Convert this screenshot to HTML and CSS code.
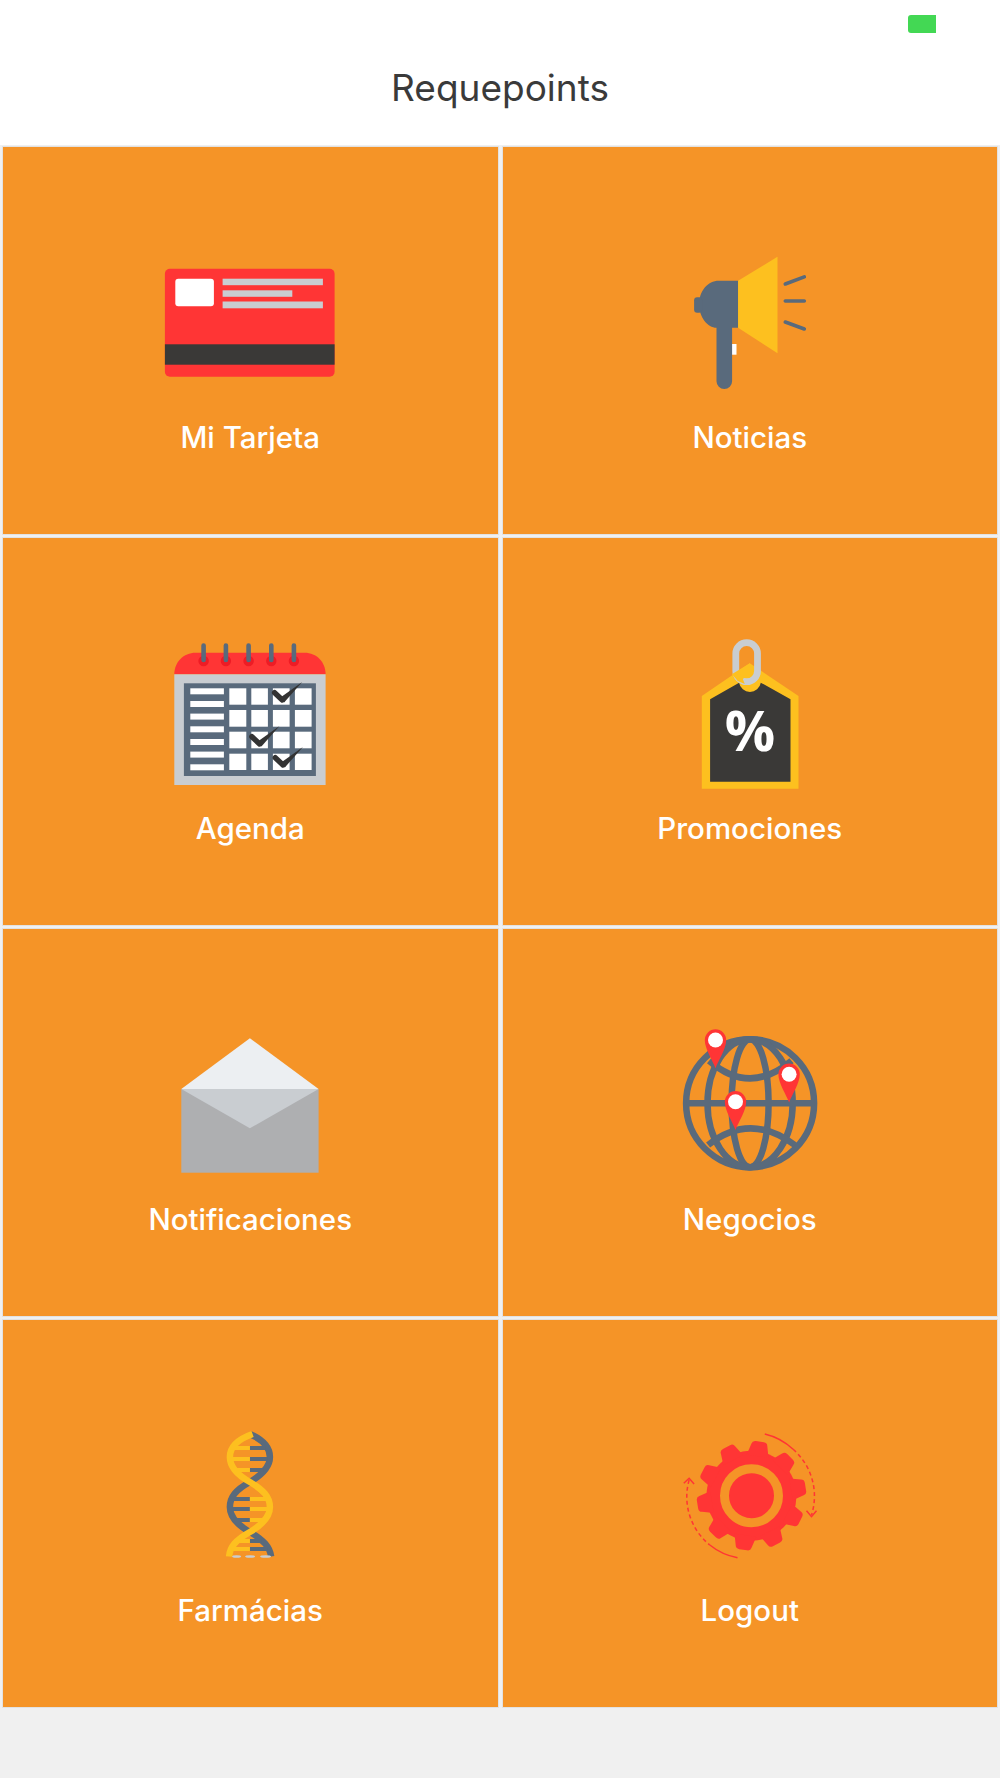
FILE: index.html
```html
<!DOCTYPE html>
<html lang="es">
<head>
  <meta charset="UTF-8">
  <title>Requepoints</title>
  <link rel="stylesheet" href="styles.css">
</head>
<body>
  <header class="cabecera">
    <div class="estado"><span class="bateria"></span></div>
    <h1>Requepoints</h1>
  </header>

  <div class="menu">
    <a class="opcion">
      <svg class="icono" viewBox="150.4 242 200 160">
        <rect x="165.3" y="268.7" width="169.7" height="108" rx="5" fill="#ff3535"/>
        <rect x="165.3" y="344.3" width="169.7" height="20.4" fill="#3a3937"/>
        <rect x="175.7" y="278.7" width="38.6" height="27.6" rx="3" fill="#fff"/>
        <rect x="223" y="278.7" width="100.3" height="6.5" fill="#c9cdd1"/>
        <rect x="223" y="290.3" width="69.7" height="6.5" fill="#c9cdd1"/>
        <rect x="223" y="301.5" width="100.3" height="6.8" fill="#c9cdd1"/>
      </svg>
      <span>Mi Tarjeta</span>
    </a>

    <a class="opcion">
      <svg class="icono" viewBox="650.2 242 200 160">
        <rect x="732" y="344" width="4.7" height="10.7" fill="#fff"/>
        <path d="M738.3 280.7H719C708 280.7 699.3 291 699.3 304.2S708 327.7 716.7 327.7V381.2A7.8 7.8 0 0 0 732.3 381.2V327.7H738.3Z" fill="#596a7c"/>
        <rect x="694.3" y="297.3" width="8" height="15.4" rx="3" fill="#596a7c"/>
        <path d="M738.3 280.7L777.7 256.7V353.3L738.3 327.7Z" fill="#fdc01f"/>
        <path d="M785.5 284L804.5 276.9M785.5 301H804.5M785.5 322L804.5 329" stroke="#596a7c" stroke-width="3.6" stroke-linecap="round"/>
      </svg>
      <span>Noticias</span>
    </a>

    <a class="opcion">
      <svg class="icono" viewBox="150.4 633 200 160">
        <defs>
          <g id="visto">
            <path d="M0 0L7.7 7.3" stroke="#333" stroke-width="5.4" stroke-linecap="round"/>
            <path d="M5.5 5L9.5 9.8L27.6 -10.8Z" fill="#333"/>
          </g>
        </defs>
        <path d="M174.7 674.3C174.7 662 184 652.7 196 652.7H305C317 652.7 326 662 326 674.3Z" fill="#ff3535"/>
        <rect x="174.7" y="674.3" width="151.3" height="110.7" fill="#c9cdd1"/>
        <rect x="184.3" y="683.3" width="132" height="92.7" fill="#596a7c"/>
        <g fill="#ee1c25">
          <circle cx="204" cy="661" r="5.2"/>
          <circle cx="226.3" cy="661" r="5.2"/>
          <circle cx="249" cy="661" r="5.2"/>
          <circle cx="271.7" cy="661" r="5.2"/>
          <circle cx="294.3" cy="661" r="5.2"/>
        </g>
        <path d="M204 645.5V660M226.3 645.5V660M249 645.5V660M271.7 645.5V660M294.3 645.5V660" stroke="#596a7c" stroke-width="4.6" stroke-linecap="round"/>
        <g fill="#fff">
          <rect x="190.7" y="688.3" width="33.6" height="6"/>
          <rect x="190.7" y="701" width="33.6" height="6"/>
          <rect x="190.7" y="713.6" width="33.6" height="6"/>
          <rect x="190.7" y="726.3" width="33.6" height="6"/>
          <rect x="190.7" y="739" width="33.6" height="6"/>
          <rect x="190.7" y="751.6" width="33.6" height="6"/>
          <rect x="190.7" y="764.3" width="33.6" height="6"/>
          <rect x="229.7" y="688.3" width="17" height="16.4"/>
          <rect x="251.7" y="688.3" width="16.6" height="16.4"/>
          <rect x="273.3" y="688.3" width="16.7" height="16.4"/>
          <rect x="295.3" y="688.3" width="16.7" height="16.4"/>
          <rect x="229.7" y="710" width="17" height="16.7"/>
          <rect x="251.7" y="710" width="16.6" height="16.7"/>
          <rect x="273.3" y="710" width="16.7" height="16.7"/>
          <rect x="295.3" y="710" width="16.7" height="16.7"/>
          <rect x="229.7" y="731.7" width="17" height="16.6"/>
          <rect x="251.7" y="731.7" width="16.6" height="16.6"/>
          <rect x="273.3" y="731.7" width="16.7" height="16.6"/>
          <rect x="295.3" y="731.7" width="16.7" height="16.6"/>
          <rect x="229.7" y="753.7" width="17" height="16.3"/>
          <rect x="251.7" y="753.7" width="16.6" height="16.3"/>
          <rect x="273.3" y="753.7" width="16.7" height="16.3"/>
          <rect x="295.3" y="753.7" width="16.7" height="16.3"/>
        </g>
        <use href="#visto" x="275" y="692.7"/>
        <use href="#visto" x="252.3" y="736.7"/>
        <use href="#visto" x="275.7" y="757.7"/>
      </svg>
      <span>Agenda</span>
    </a>

    <a class="opcion">
      <svg class="icono" viewBox="650.2 633 200 160">
        <path d="M702 696L750 663.3L798.7 696V788.7H702Z" fill="#fdc01f"/>
        <path d="M710.3 699.3L739.3 682.7A11 11 0 0 0 761 682.7L790.7 699.3V781.7H710.3Z" fill="#3a3937"/>
        <rect x="736" y="642.7" width="21.7" height="39" rx="10.8" fill="none" stroke="#c9cdd1" stroke-width="6.8"/>
        <path d="M732 674.3L750 663.3L752.7 671.5L743 679L745 684L738 681Z" fill="#fdc01f"/>
        <text class="porcentaje" x="750.3" y="750.7">%</text>
      </svg>
      <span>Promociones</span>
    </a>

    <a class="opcion">
      <svg class="icono" viewBox="150.4 1024 200 160">
        <path d="M250.3 1038.3L319 1089H181.7Z" fill="#eceff2"/>
        <rect x="181.7" y="1089" width="137.3" height="83.7" fill="#aeafb1"/>
        <path d="M181.7 1089H319L250.3 1128.3Z" fill="#c9cdd1"/>
      </svg>
      <span>Notificaciones</span>
    </a>

    <a class="opcion">
      <svg class="icono" viewBox="650.2 1024 200 160">
        <defs>
          <g id="pin">
            <path d="M-10.7 0A10.7 10.7 0 0 1 10.7 0C10.7 9 3 20 0 28.3C-3 20 -10.7 9 -10.7 0Z" fill="#ff3535"/>
            <circle r="7.5" fill="#fff"/>
          </g>
        </defs>
        <g fill="none" stroke="#596a7c" stroke-width="6.5">
          <circle cx="750.3" cy="1103.3" r="64"/>
          <ellipse cx="750.3" cy="1103.3" rx="18.5" ry="64"/>
          <ellipse cx="750.3" cy="1103.3" rx="42.6" ry="64"/>
          <path d="M686.3 1103.3H814.3"/>
          <path d="M709.3 1060.7Q750 1096 791.7 1060.7"/>
          <path d="M708.3 1145Q750 1111.6 795 1145"/>
        </g>
        <use href="#pin" x="715.7" y="1040"/>
        <use href="#pin" x="789.3" y="1074.3"/>
        <use href="#pin" x="735.7" y="1101.7"/>
      </svg>
      <span>Negocios</span>
    </a>

    <a class="opcion">
      <svg class="icono" viewBox="150.4 1415 200 160">
        <path d="M250.3 1434C264 1440 270.3 1448 270.3 1457C270.3 1466 264 1474 250.3 1482C236 1490 230.3 1497 230.3 1507C230.3 1516 236 1524 250.3 1532C264 1540 270.3 1547 271.5 1556.5" fill="none" stroke="#596a7c" stroke-width="6.5"/>
        <path d="M250.3 1448H266M250.3 1459H268M250.3 1470H264M234 1499H250.3M232 1509H250.3M236 1520H250.3M250.3 1541H262M250.3 1549H268" stroke="#596a7c" stroke-width="3.8"/>
        <path d="M234.6 1448H250.3M232.6 1459H250.3M236.6 1470H250.3M250.3 1499H267M250.3 1509H269M250.3 1520H265M238 1541H250.3M233 1549H250.3" stroke="#fdc01f" stroke-width="3.8"/>
        <path d="M253 1434C236 1440 230.3 1448 230.3 1457C230.3 1466 236 1474 250.3 1482C264 1490 270.3 1497 270.3 1507C270.3 1516 264 1524 250.3 1532C236 1540 230.3 1547 229.5 1556.5" fill="none" stroke="#fdc01f" stroke-width="6.5"/>
        <g fill="#c9cdd1">
          <ellipse cx="237" cy="1556.5" rx="4.5" ry="1.3"/>
          <ellipse cx="250.5" cy="1556.5" rx="5" ry="1.3"/>
          <ellipse cx="266" cy="1556.5" rx="5.5" ry="1.3"/>
        </g>
      </svg>
      <span>Farmácias</span>
    </a>

    <a class="opcion">
      <svg class="icono" viewBox="650.2 1415 200 160">
        <defs>
          <path id="dientes" d="M-11 -40L-8 -51.5Q-7.5 -54.7 -4 -54.7H4Q7.5 -54.7 8 -51.5L11 -40ZM-11 40L-8 51.5Q-7.5 54.7 -4 54.7H4Q7.5 54.7 8 51.5L11 40Z" fill="#ff3535"/>
        </defs>
        <g transform="translate(751.7 1495.7)">
          <circle r="45" fill="#ff3535"/>
          <use href="#dientes" transform="rotate(8.8)"/>
          <use href="#dientes" transform="rotate(44.8)"/>
          <use href="#dientes" transform="rotate(80.8)"/>
          <use href="#dientes" transform="rotate(116.8)"/>
          <use href="#dientes" transform="rotate(152.8)"/>
          <circle r="27" fill="none" stroke="#f59427" stroke-width="9"/>
        </g>
        <g fill="none" stroke="#ff3535" stroke-width="1.5">
          <path d="M765 1434A62 62 0 0 1 793.3 1449.3"/>
          <path d="M793.3 1449.3A62 62 0 0 1 811.7 1515" stroke-dasharray="4 3"/>
          <path d="M806.7 1510.7L811.7 1516.7L816.7 1510.7"/>
          <path d="M689.3 1480A62 62 0 0 0 710 1545" stroke-dasharray="4 3"/>
          <path d="M710 1545A62 62 0 0 0 737.7 1557.7"/>
          <path d="M684 1483.3L689.3 1478.3L694.3 1484"/>
        </g>
      </svg>
      <span>Logout</span>
    </a>
  </div>
</body>
</html>
```

FILE: styles.css
```css
body {
  font-family: Inter, "Noto Sans", sans-serif;
  background-color: #f0f0f0;
  margin: 0;
  padding: 0;
  min-height: 1778px;
}

.cabecera {
  height: 145px;
  background-color: #fff;
  display: flex;
  flex-direction: column;
}

.estado {
  display: flex;
  justify-content: flex-end;
  padding: 15px 64px 0 0;
}

.bateria {
  width: 28px;
  height: 18px;
  background-color: #43d854;
  border-radius: 3px 0 0 3px;
}

h1 {
  margin: 30px 0 0;
  font-size: 37px;
  line-height: 50px;
  font-weight: 400;
  color: #3a3a3a;
  text-align: center;
}

.menu {
  display: grid;
  grid-template-columns: 1fr 1fr;
  grid-auto-rows: 389px;
  column-gap: 3px;
  row-gap: 2px;
  padding: 1px 2px 0 2px;
}

.opcion {
  background-color: #f59427;
  border: 1px solid #e2e2e2;
  padding-top: 95px;
  display: flex;
  flex-direction: column;
  align-items: center;
  color: #fff;
  font-size: 29.5px;
  font-weight: 500;
}

.opcion span {
  margin-top: 20px;
  line-height: 30px;
}

.icono {
  width: 200px;
  height: 160px;
  display: block;
}

.porcentaje {
  font-family: "Open Sans", sans-serif;
  font-size: 56px;
  font-weight: 700;
  fill: #fff;
  text-anchor: middle;
}
```
